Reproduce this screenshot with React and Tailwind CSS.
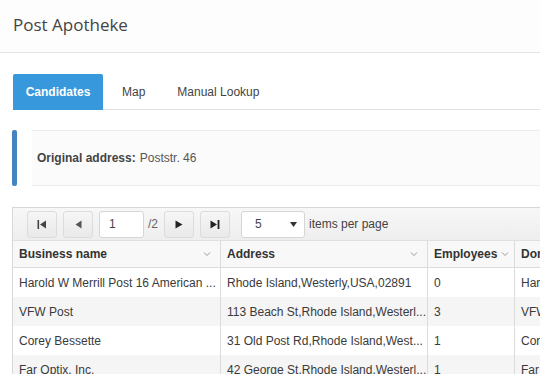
const rows = [
  ["Harold W Merrill Post 16 American ...", "Rhode Island,Westerly,USA,02891", "0", "Harold W Merrill Post"],
  ["VFW Post", "113 Beach St,Rhode Island,Westerl...", "3", "VFW Post"],
  ["Corey Bessette", "31 Old Post Rd,Rhode Island,West...", "1", "Corey Bessette"],
  ["Far Optix, Inc.", "42 George St,Rhode Island,Westerl...", "1", "Far Optix"],
];

function PagerButton({ children }) {
  return (
    <button className="flex h-[27px] w-[30px] items-center justify-center rounded-[3px] border border-[#dcdcdc] bg-gradient-to-b from-[#f6f6f6] to-[#e9e9e9] text-[#333]">
      {children}
    </button>
  );
}

function Chevron() {
  return (
    <svg width="8" height="6" viewBox="0 0 8 6" className="shrink-0">
      <path d="M1 1.5 L4 4.5 L7 1.5" fill="none" stroke="#999" strokeWidth="1" />
    </svg>
  );
}

export default function App() {
  return (
    <div className="h-[374px] w-[540px] overflow-hidden bg-white font-['Liberation_Sans',Arial,sans-serif] text-[#333]">
      <header className="flex h-[53px] items-center border-b border-[#e4e4e4] bg-[#fdfdfd] px-[13px]">
        <h1 className="pb-[2px] font-['Open_Sans',sans-serif] text-[17px] font-normal text-[#444]">Post Apotheke</h1>
      </header>

      <div className="mt-[21px] flex items-end pl-[13px]">
        <div className="flex h-[36px] w-[90px] items-center justify-center rounded-t-[2px] bg-[#3798dc] text-[12px] font-bold text-white">
          Candidates
        </div>
        <div className="flex h-[36px] flex-1 items-center border-b border-[#e2e2e2] text-[12px] text-[#444]">
          <span className="ml-[10px] px-[9px]">Map</span>
          <span className="ml-[14px] px-[9px]">Manual Lookup</span>
        </div>
      </div>

      <div className="mt-[20px] flex h-[56px] pl-[12px]">
        <div className="w-[5px] rounded-[2px] bg-[#4585bf]" />
        <div className="ml-[15px] flex flex-1 items-center border-y border-[#ececec] bg-[#fbfbfb] pl-[5px] text-[12px]">
          <span className="font-bold text-[#444]">Original address:</span>
          <span className="ml-[4px] text-[#555]">Poststr. 46</span>
        </div>
      </div>

      <div className="ml-[12px] mt-[21px] w-[600px] border-l border-t border-[#d8d8d8]">
        <div className="flex h-[33px] items-center gap-[6px] border-b border-[#e0e0e0] bg-gradient-to-b from-[#f7f7f7] to-[#eeeeee] pl-[14px] text-[12px]">
          <PagerButton>
            <svg width="10" height="9" viewBox="0 0 10 9">
              <rect x="0.5" y="0" width="1.6" height="9" fill="#444" />
              <path d="M9 0.5 L3 4.5 L9 8.5 Z" fill="#444" />
            </svg>
          </PagerButton>
          <PagerButton>
            <svg width="7" height="9" viewBox="0 0 7 9">
              <path d="M6.5 0.5 L0.5 4.5 L6.5 8.5 Z" fill="#555" />
            </svg>
          </PagerButton>
          <div className="flex h-[27px] w-[45px] items-center rounded-[3px] border border-[#d6d6d6] bg-white pl-[9px] text-[#444]">1</div>
          <span className="-ml-[2px] text-[#666]">/2</span>
          <PagerButton>
            <svg width="8" height="9" viewBox="0 0 8 9">
              <path d="M0.5 0.5 L7.5 4.5 L0.5 8.5 Z" fill="#222" />
            </svg>
          </PagerButton>
          <PagerButton>
            <svg width="10" height="9" viewBox="0 0 10 9">
              <path d="M0.5 0.5 L7 4.5 L0.5 8.5 Z" fill="#222" />
              <rect x="7.6" y="0" width="1.8" height="9" fill="#222" />
            </svg>
          </PagerButton>
          <div className="ml-[5px] flex h-[27px] w-[64px] items-center justify-between rounded-[3px] border border-[#d6d6d6] bg-white pl-[13px] pr-[7px] text-[#444]">
            <span>5</span>
            <svg width="7" height="5" viewBox="0 0 7 5">
              <path d="M0 0 L7 0 L3.5 5 Z" fill="#333" />
            </svg>
          </div>
          <span className="-ml-[2px] text-[#444]">items per page</span>
        </div>

        <div className="grid grid-cols-[208px_207px_87px_100px] text-[12px]">
          <div className="flex h-[27px] items-center justify-between border-b border-r border-[#dcdcdc] bg-[#f8f8f8] pl-[6px] pr-[9px] font-bold text-[#333]">
            <span>Business name</span>
            <Chevron />
          </div>
          <div className="flex h-[27px] items-center justify-between border-b border-r border-[#dcdcdc] bg-[#f8f8f8] pl-[6px] pr-[9px] font-bold text-[#333]">
            <span>Address</span>
            <Chevron />
          </div>
          <div className="flex h-[27px] items-center border-b border-r border-[#dcdcdc] bg-[#f8f8f8] pl-[6px] font-bold text-[#333]">
            <span>Employees</span>
            <span className="ml-[4px]"><Chevron /></span>
          </div>
          <div className="flex h-[27px] items-center border-b border-[#dcdcdc] bg-[#f8f8f8] pl-[6px] font-bold text-[#333]">
            <span>Domain</span>
          </div>

          {rows.map((r, i) => (
            <div key={i} className="contents">
              {r.map((c, j) => (
                <div
                  key={j}
                  className={`flex h-[29px] items-center overflow-hidden whitespace-nowrap pl-[6px] text-[#3a3a3a] ${j < 3 ? "border-r border-[#dcdcdc]" : ""} ${i % 2 === 1 ? "bg-[#f5f5f5]" : "bg-white"}`}
                >
                  {c}
                </div>
              ))}
            </div>
          ))}
        </div>
      </div>
    </div>
  );
}
